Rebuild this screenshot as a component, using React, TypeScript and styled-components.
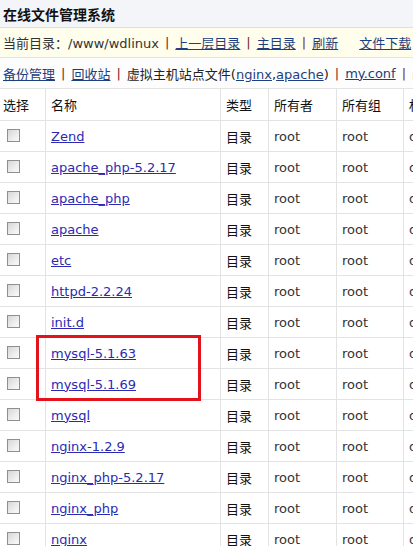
import styled, { createGlobalStyle } from 'styled-components';

const GlobalStyle = createGlobalStyle`
  html, body {
    margin: 0;
    padding: 0;
    background: #fff;
    overflow: hidden;
  }
  body {
    font-family: "DejaVu Sans", "Noto Sans CJK SC", sans-serif;
    font-size: 13px;
    color: #222;
  }
`;

type Entry = {
  name: string;
  type: string;
  owner: string;
  group: string;
  perm: string;
};

const dirs = [
  'Zend',
  'apache_php-5.2.17',
  'apache_php',
  'apache',
  'etc',
  'httpd-2.2.24',
  'init.d',
  'mysql-5.1.63',
  'mysql-5.1.69',
  'mysql',
  'nginx-1.2.9',
  'nginx_php-5.2.17',
  'nginx_php',
  'nginx',
];

const entries: Entry[] = dirs.map(name => ({
  name,
  type: '目录',
  owner: 'root',
  group: 'root',
  perm: 'drwxr-xr-x',
}));

// rows wrapped by the red marker
const marked = { from: 7, count: 2 };
const ROW_H = 31;

const columns = '46px 175px 48px 68px 67px 110px 150px';

const App = () => {
  return (
    <Page>
      <GlobalStyle />
      <TitleBar>在线文件管理系统</TitleBar>
      <PathBar>
        <span>当前目录：/www/wdlinux</span>
        <Sep>|</Sep>
        <NavLink href="#">上一层目录</NavLink>
        <Sep>|</Sep>
        <NavLink href="#">主目录</NavLink>
        <Sep>|</Sep>
        <NavLink href="#">刷新</NavLink>
        <Spacer />
        <NavLink href="#">文件下载</NavLink>
      </PathBar>
      <ToolBar>
        <NavLink href="#">备份管理</NavLink>
        <Sep>|</Sep>
        <NavLink href="#">回收站</NavLink>
        <Sep>|</Sep>
        <span>
          虚拟主机站点文件(<NavLink href="#">nginx</NavLink>,<NavLink href="#">apache</NavLink>)
        </span>
        <Sep>|</Sep>
        <NavLink href="#">my.conf</NavLink>
        <Sep>|</Sep>
        <NavLink href="#">php.ini</NavLink>
      </ToolBar>

      <Table>
        <HeadRow>
          <Cell $first>选择</Cell>
          <Cell>名称</Cell>
          <Cell>类型</Cell>
          <Cell>所有者</Cell>
          <Cell>所有组</Cell>
          <Cell>权限</Cell>
          <Cell>修改时间</Cell>
        </HeadRow>
        <Body>
          {entries.map(e => (
            <Row key={e.name}>
              <Cell $first>
                <Check />
              </Cell>
              <Cell>
                <FileLink href="#">{e.name}</FileLink>
              </Cell>
              <Cell>{e.type}</Cell>
              <Cell $mono>{e.owner}</Cell>
              <Cell $mono>{e.group}</Cell>
              <Cell $mono>{e.perm}</Cell>
              <Cell $mono>2013-05-20 10:12</Cell>
            </Row>
          ))}
          <Marker $top={marked.from * ROW_H - 3} $height={marked.count * ROW_H + 4} />
        </Body>
      </Table>
    </Page>
  );
};

const Page = styled.div`
  width: 760px;
  white-space: nowrap;
`;

const TitleBar = styled.div`
  height: 27px;
  display: flex;
  align-items: center;
  padding-left: 3px;
  background: #f3f5f8;
  border-bottom: 1px solid #dedfe2;
  font-family: "Noto Sans CJK SC", sans-serif;
  font-size: 14px;
  font-weight: bold;
  color: #111;
`;

const PathBar = styled.div`
  height: 29px;
  display: flex;
  align-items: center;
  padding-left: 3px;
  background: #fffdec;
  border-bottom: 1px solid #e4e4e0;
  color: #333;
`;

const ToolBar = styled.div`
  height: 30px;
  display: flex;
  align-items: center;
  padding-left: 3px;
  background: #fdfdfd;
  border-bottom: 1px solid #e3e3e3;
  color: #222;
`;

const Sep = styled.span`
  color: #7a1c2a;
  margin: 0 6px;
`;

const Spacer = styled.span`
  width: 21px;
`;

const NavLink = styled.a`
  color: #1e3f7e;
  text-decoration: underline;
`;

const Table = styled.div`
  display: flex;
  flex-direction: column;
`;

const Body = styled.div`
  position: relative;
`;

const HeadRow = styled.div`
  display: grid;
  grid-template-columns: ${columns};
  height: 32px;
  border-bottom: 1px solid #e3e3e3;
  box-sizing: border-box;
  color: #111;
`;

const Row = styled.div`
  display: grid;
  grid-template-columns: ${columns};
  height: ${ROW_H}px;
  border-bottom: 1px solid #e3e3e3;
  box-sizing: border-box;
`;

const Cell = styled.div<{ $first?: boolean; $mono?: boolean }>`
  display: flex;
  align-items: center;
  box-sizing: border-box;
  padding-left: ${p => (p.$first ? '3px' : '5px')};
  border-right: 1px solid #e3e3e3;
  overflow: hidden;
  color: ${p => (p.$mono ? '#333' : '#111')};
`;

const Check = styled.span`
  display: block;
  width: 13px;
  height: 13px;
  margin-left: 4px;
  margin-top: -1px;
  box-sizing: border-box;
  border: 1px solid #8f8f8f;
  background: linear-gradient(135deg, #d6d6d6 0%, #ececec 55%, #fafafa 100%);
`;

const FileLink = styled.a`
  color: #2a2ab4;
  text-decoration: underline;
`;

const Marker = styled.div<{ $top: number; $height: number }>`
  position: absolute;
  left: 36px;
  top: ${p => p.$top}px;
  width: 165px;
  height: ${p => p.$height}px;
  box-sizing: border-box;
  border: 3px solid #e4131b;
  pointer-events: none;
`;

export default App;
